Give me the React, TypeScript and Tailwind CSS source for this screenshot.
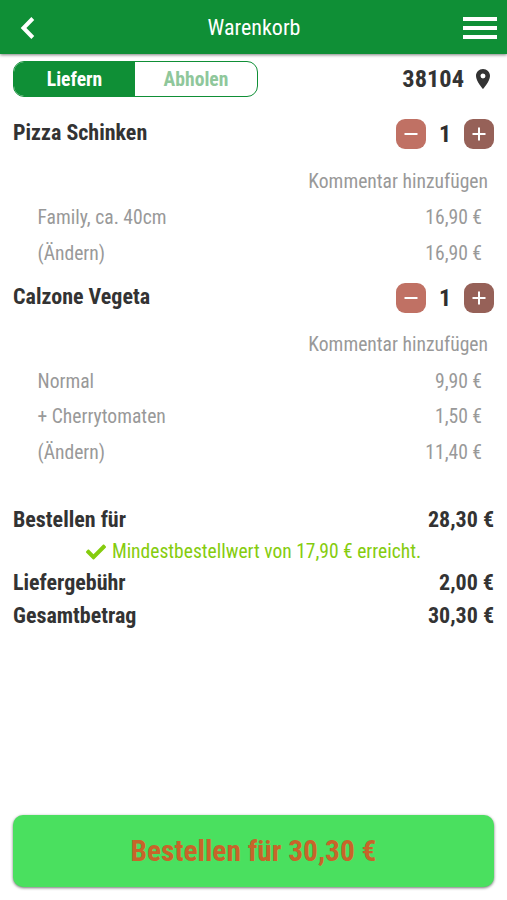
import { FaCheck } from "react-icons/fa";
import { MdLocationOn } from "react-icons/md";

const items = [
  {
    name: "Pizza Schinken",
    lines: [
      ["Family, ca. 40cm", "16,90 €"],
      ["(Ändern)", "16,90 €"],
    ],
  },
  {
    name: "Calzone Vegeta",
    lines: [
      ["Normal", "9,90 €"],
      ["+ Cherrytomaten", "1,50 €"],
      ["(Ändern)", "11,40 €"],
    ],
  },
];

function Stepper() {
  return (
    <div className="flex items-center text-white">
      <button className="flex size-[30px] items-center justify-center rounded-[9px] bg-[#c07164]">
        <svg width="14" height="14" viewBox="0 0 14 14" stroke="currentColor" strokeWidth="2">
          <path d="M0.5 7h13" />
        </svg>
      </button>
      <span className="w-[38px] text-center text-2xl font-bold text-[#2e2e2e]">1</span>
      <button className="flex size-[30px] items-center justify-center rounded-[9px] bg-[#966158]">
        <svg width="14" height="14" viewBox="0 0 14 14" stroke="currentColor" strokeWidth="2">
          <path d="M0.5 7h13M7 0.5v13" />
        </svg>
      </button>
    </div>
  );
}

export default function App() {
  return (
    <div className="flex h-[900px] w-[507px] flex-col bg-white font-['Roboto_Condensed',Roboto,sans-serif] font-stretch-condensed text-[#333]">
      <header className="grid h-[54px] shrink-0 grid-cols-[1fr_auto_1fr] items-center bg-[#0f8f36] pr-[10px] pl-5 text-white shadow-[0_1px_3px_rgba(0,0,0,0.5)]">
        <svg className="mt-[2px]" width="15" height="22" viewBox="0 0 15 22" fill="none" stroke="currentColor" strokeWidth="4">
          <path d="M12.8 1.5L3.5 11l9.3 9.5" />
        </svg>
        <h1 className="-ml-[9px] text-[22px]">Warenkorb</h1>
        <svg className="mt-[2px] justify-self-end" width="34" height="24" viewBox="0 0 34 24" stroke="currentColor" strokeWidth="4">
          <path d="M0 3h34M0 12h34M0 21h34" />
        </svg>
      </header>

      <div className="flex h-[52.2px] shrink-0 items-start justify-between pt-[7px] pr-[12px] pl-[13px]">
        <div className="flex h-9 w-[245px] overflow-hidden rounded-[11px] border border-[#0f8f36] text-[19.6px] font-bold">
          <button className="w-[121px] bg-[#0f8f36] pt-[2px] text-white">Liefern</button>
          <button className="flex-1 pt-[2px] text-[#8fc79b]">Abholen</button>
        </div>
        <div className="flex h-9 items-center text-[24.4px] font-bold">
          38104
          <MdLocationOn className="ml-[7px] size-6" />
        </div>
      </div>

      {items.map((item) => (
        <section key={item.name} className="shrink-0">
          <div className="flex h-14 items-center justify-between px-[13px]">
            <h2 className="pb-[3px] text-[22px] font-bold">{item.name}</h2>
            <Stepper />
          </div>
          <div className="flex h-[36.5px] items-center justify-end pt-[2px] pr-[19px] text-[19.6px] text-[#999]">
            <span>Kommentar hinzufügen</span>
          </div>
          {item.lines.map(([label, price]) => (
            <div key={label} className="flex h-[35.5px] items-center justify-between pt-[3px] pr-[25px] pl-[37.5px] text-[19.6px] text-[#999]">
              <span>{label}</span>
              <span>{price}</span>
            </div>
          ))}
        </section>
      ))}

      <section className="mt-[35px] px-[13px] text-[22px] font-bold">
        <div className="flex h-8 items-center justify-between">
          <span>Bestellen für</span>
          <span>28,30 €</span>
        </div>
        <div className="flex h-[30px] items-center justify-center pt-[2px] text-[19.55px] font-normal text-[#85cc0e]">
          <FaCheck className="mr-[6px] size-5" />
          <span>Mindestbestellwert von 17,90 € erreicht.</span>
        </div>
        <div className="flex h-[33px] items-center justify-between">
          <span>Liefergebühr</span>
          <span>2,00 €</span>
        </div>
        <div className="flex h-[33px] items-center justify-between">
          <span>Gesamtbetrag</span>
          <span>30,30 €</span>
        </div>
      </section>

      <button className="mx-[13px] mt-auto mb-[13px] h-[72px] shrink-0 rounded-[10px] bg-[#4ae05f] text-[29.4px] font-bold text-[#c8642a] shadow-[0_1px_3px_rgba(0,0,0,0.55)]">
        Bestellen für 30,30 €
      </button>
    </div>
  );
}
